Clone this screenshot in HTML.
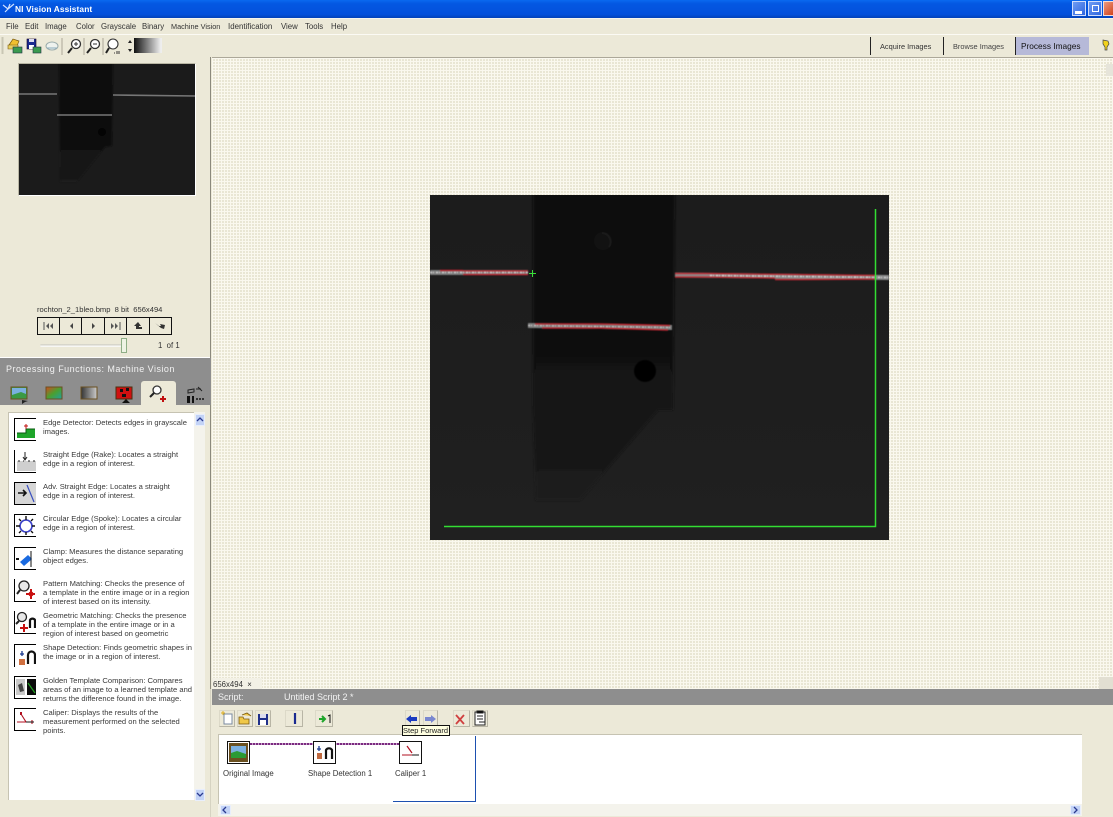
<!DOCTYPE html>
<html><head><meta charset="utf-8"><style>
html,body{margin:0;padding:0}
body{width:1113px;height:817px;overflow:hidden;position:relative;background:#ece9d8;font-family:"Liberation Sans",sans-serif;font-size:7.8px;color:#333}
div,svg,span{position:absolute}
.t{white-space:nowrap;line-height:9px;filter:blur(.3px)}
.btn{background:#ece9d8;border:1px solid #dcd9c8;border-right-color:#b8b5a5;border-bottom-color:#b8b5a5;box-sizing:border-box}
.ic{left:14px;width:22px;height:23px;border:1px solid #000;border-right:none;background:#fff;box-sizing:border-box}
.ic svg{left:0;top:0}
.row{left:43px;width:150px;line-height:9px;white-space:nowrap;font-size:7.6px;color:#3a3a3a;filter:blur(.3px)}
</style></head><body>

<!-- title bar -->
<div style="left:0;top:0;width:1113px;height:18px;background:linear-gradient(#0a6af0 0,#0458e2 20%,#0350dc 80%,#0342b8 100%)"></div>
<svg style="left:2px;top:2px" width="14" height="13"><path d="M1 3l5 4M8 2l-2 5 6-5M3 10l3-3" stroke="#cfe0ff" stroke-width="1.2" fill="none"/></svg>
<div class="t" style="left:15px;top:5px;color:#fff;font-size:8.4px;font-weight:bold;letter-spacing:.1px">NI Vision Assistant</div>
<div style="left:1072px;top:1px;width:14px;height:15px;background:linear-gradient(135deg,#6f9cf2,#2f66e0);border:1px solid #cfdcfb;box-sizing:border-box"><div style="left:2px;top:9px;width:7px;height:3px;background:#fff"></div></div>
<div style="left:1088px;top:1px;width:14px;height:15px;background:linear-gradient(135deg,#6f9cf2,#2f66e0);border:1px solid #cfdcfb;box-sizing:border-box"><div style="left:3px;top:3px;width:7px;height:7px;border:1px solid #fff;box-sizing:border-box"></div></div>
<div style="left:1103px;top:1px;width:10px;height:15px;background:linear-gradient(135deg,#eb9a80,#d2431c);border:1px solid #f3dfd8;border-right:none;box-sizing:border-box"></div>

<!-- menu -->
<div style="left:0;top:18px;width:1113px;height:1px;background:#f7f5ec"></div>
<div class="t" style="left:6px;top:22px">File</div>
<div class="t" style="left:25px;top:22px">Edit</div>
<div class="t" style="left:45px;top:22px">Image</div>
<div class="t" style="left:76px;top:22px">Color</div>
<div class="t" style="left:101px;top:22px">Grayscale</div>
<div class="t" style="left:142px;top:22px">Binary</div>
<div class="t" style="left:171px;top:22px;font-size:7.3px">Machine Vision</div>
<div class="t" style="left:228px;top:22px;font-size:7.9px">Identification</div>
<div class="t" style="left:281px;top:22px">View</div>
<div class="t" style="left:305px;top:22px">Tools</div>
<div class="t" style="left:331px;top:22px">Help</div>

<!-- toolbar -->
<div style="left:0;top:34px;width:1113px;height:1px;background:#fbfaf4"></div>
<svg style="left:0;top:34px" width="170" height="23">
<path d="M2 3v17M3 3v17" stroke="#c9c6b4" stroke-width="1"/>
<path d="M9 11l4-6 6 2-2 5z" fill="#f0c030" stroke="#7a5a10" stroke-width=".7"/><path d="M8 11h10v4H8z" fill="#e8d060" stroke="#7a5a10" stroke-width=".6"/><rect x="13" y="13" width="9" height="6" fill="#3a9a50" stroke="#234" stroke-width=".6"/>
<rect x="27" y="5" width="9" height="10" fill="#1a2a90" stroke="#102"  stroke-width=".6"/><rect x="29" y="5" width="5" height="3" fill="#dde"/><rect x="29" y="11" width="5" height="4" fill="#fff"/><rect x="33" y="13" width="8" height="6" fill="#3a9a50" stroke="#234" stroke-width=".6"/>
<ellipse cx="52" cy="12" rx="6" ry="4" fill="#eef2ee" stroke="#9aa" stroke-width="1"/><path d="M47 14h10" stroke="#8ab" stroke-width="1"/>
<path d="M62 4v17M84 4v17M103 4v17" stroke="#aca899" stroke-width="1"/>
<circle cx="76" cy="10" r="4.5" fill="#fff" stroke="#333" stroke-width="1.3"/><path d="M72 14l-4 5" stroke="#222" stroke-width="2"/><path d="M74 10h4M76 8v4" stroke="#333" stroke-width="1"/>
<circle cx="95" cy="10" r="4.5" fill="#fff" stroke="#333" stroke-width="1.3"/><path d="M91 14l-4 5" stroke="#222" stroke-width="2"/><path d="M93 10h4" stroke="#333" stroke-width="1"/>
<circle cx="113" cy="10" r="5" fill="#fff" stroke="#333" stroke-width="1.1"/><path d="M109 14l-3 5" stroke="#222" stroke-width="2"/><path d="M114 19h1M117 17v3M119 17v3" stroke="#333" stroke-width="1"/>
<path d="M130 6l-2 3h4zM130 18l-2-3h4z" fill="#222"/>
</svg>
<div style="left:134px;top:38px;width:28px;height:15px;background:linear-gradient(90deg,#111,#eee 95%)"></div>

<!-- mode tabs -->
<div style="left:870px;top:37px;width:74px;height:18px;border-left:1px solid #222;box-sizing:border-box"></div>
<div style="left:943px;top:37px;width:72px;height:18px;border-left:1px solid #222;box-sizing:border-box"></div>
<div style="left:1015px;top:37px;width:74px;height:18px;border-left:1px solid #222;background:#b6b9d8;box-sizing:border-box"></div>
<div class="t" style="left:880px;top:42px;color:#333;font-size:7.4px">Acquire Images</div>
<div class="t" style="left:953px;top:42px;color:#444;font-size:7.4px">Browse Images</div>
<div class="t" style="left:1021px;top:42px;color:#111;font-size:8.3px">Process Images</div>
<svg style="left:1100px;top:38px" width="13" height="15"><path d="M3 2l5 1 1 3-2 3v3H5V9L3 6z" fill="#f2d21c" stroke="#444" stroke-width=".7"/></svg>

<!-- workspace -->
<div style="left:212px;top:57px;width:901px;height:1px;background:#aca899"></div>
<div style="left:212px;top:58px;width:901px;height:631px;background-color:#e9e6d4;background-image:linear-gradient(#faf8ee 1px,transparent 1px),linear-gradient(90deg,#faf8ee 1px,transparent 1px);background-size:3px 3px"></div>
<div style="left:210px;top:57px;width:1px;height:632px;background:#8b897c"></div>
<div style="left:1106px;top:64px;width:7px;height:12px;background:#e6e4da"></div>
<div style="left:1099px;top:677px;width:14px;height:12px;background:#e2dfd2"></div>
<div style="left:212px;top:678px;width:50px;height:11px;background:#f3f1e6"></div>
<div class="t" style="left:213px;top:680px;color:#333">656x494 &nbsp;×</div>

<!-- main image -->
<svg style="left:430px;top:195px" width="459" height="345" viewBox="0 0 459 345">
<defs>
<linearGradient id="bg" x1="0" y1="0" x2="0" y2="1"><stop offset="0" stop-color="#1c1c1c"/><stop offset=".55" stop-color="#1e1e1e"/><stop offset="1" stop-color="#202020"/></linearGradient>
<linearGradient id="bd" gradientUnits="userSpaceOnUse" x1="0" y1="0" x2="0" y2="305"><stop offset="0" stop-color="#0e0e0e"/><stop offset=".5" stop-color="#111"/><stop offset=".72" stop-color="#131313"/><stop offset="1" stop-color="#1d1d1d"/></linearGradient>
<filter id="f1" x="-5%" y="-5%" width="110%" height="110%"><feGaussianBlur stdDeviation="1.200"/></filter>
<filter id="f2" x="-5%" y="-50%" width="110%" height="200%"><feGaussianBlur stdDeviation=".5"/></filter>
</defs>
<rect width="459" height="345" fill="url(#bg)"/>
<path d="M103 -5H245L243 215L228 215L150 305L106 305L103 210Z" fill="url(#bd)" filter="url(#f1)"/>
<circle cx="173" cy="46" r="9" fill="#121212"/>
<path d="M172 38a9 9 0 0 1 7 14" stroke="#1a1a1a" stroke-width="2" fill="none"/>
<circle cx="215" cy="176" r="11" fill="#040404" filter="url(#f2)"/>
<g filter="url(#f2)">
<!-- left line -->
<path d="M0 77.500H98" stroke="#7e7e7e" stroke-width="5"/>
<path d="M10 75.500H33M33 76H98M33 79.500H98" stroke="#bb2730" stroke-width="1.600"/>
<path d="M0 77.500H98" stroke="#d8d8d8" stroke-width="1.300" stroke-dasharray="2 1 1 2"/>
<!-- mid line -->
<path d="M98 130.500L242 132.500" stroke="#7e7e7e" stroke-width="5"/>
<path d="M105 129H170L240 130.500M112 133H170L238 135" stroke="#bb2730" stroke-width="1.600"/>
<path d="M98 130.500L242 132.500" stroke="#cfcfcf" stroke-width="1" stroke-dasharray="2 1 1 2"/>
<!-- right line -->
<path d="M245 80L459 82.500" stroke="#8a8a8a" stroke-width="5"/>
<path d="M245 78.500H275L445 80.500M245 82H280L345 83M345 84.500H372L445 84" stroke="#bb2730" stroke-width="1.500"/>
<path d="M280 80.500L459 82.500" stroke="#dcdcdc" stroke-width="1.200" stroke-dasharray="2 1 1 2"/>
</g>
<!-- green -->
<path d="M445.500 14V331.500H14" stroke="#33dd33" stroke-width="1.500" fill="none"/>
<path d="M102.500 75v7M99 78.500h7" stroke="#39e039" stroke-width="1"/>
</svg>

<!-- thumbnail -->
<svg style="left:19px;top:64px" width="177" height="132" viewBox="0 0 177 132">
<defs>
<linearGradient id="tb" gradientUnits="userSpaceOnUse" x1="0" y1="0" x2="0" y2="118"><stop offset="0" stop-color="#0e0e0e"/><stop offset=".72" stop-color="#111"/><stop offset="1" stop-color="#1a1a1a"/></linearGradient>
<filter id="f3" x="-5%" y="-5%" width="110%" height="110%"><feGaussianBlur stdDeviation=".8"/></filter>
</defs>
<rect width="177" height="132" fill="#1b1b1b"/>
<path d="M40 -2H94L93 82L86 83L58 118L41 118Z" fill="url(#tb)" filter="url(#f3)"/>
<circle cx="83" cy="68" r="4" fill="#040404"/>
<path d="M0 30H38M38 51H93M94 31L177 32" stroke="#777" stroke-width="1.600"/>
</svg>
<div style="left:18px;top:63px;width:178px;height:133px;border:1px solid #b9b6a4;border-right-color:#fff;border-bottom-color:#fff;box-sizing:border-box"></div>

<!-- nav -->
<div class="t" style="left:37px;top:305px;font-size:7.600px;color:#333">rochton_2_1bleo.bmp&nbsp; 8 bit&nbsp; 656x494</div>
<div style="left:37px;top:317px;width:135px;height:18px;border:1px solid #111;box-sizing:border-box"></div>
<svg style="left:37px;top:317px" width="136" height="18">
<path d="M22.500 1v16M44.500 1v16M67.500 1v16M89.500 1v16M112.500 1v16" stroke="#111"/>
<path d="M7 5v8" stroke="#555"/><path d="M12 6l-3 3 3 3zM16 6l-3 3 3 3z" fill="#555"/>
<path d="M36 6l-3 3 3 3z" fill="#444"/><path d="M55 6l3 3-3 3z" fill="#444"/>
<path d="M74 6l3 3-3 3zM78 6l3 3-3 3z" fill="#555"/><path d="M83 5v8" stroke="#555"/>
<path d="M101 5l-4 4h2v3h6v-2h-3V9h2z" fill="#333"/>
<path d="M118 6l4 3h2l-1-2 5 1-1 4-3-1z" fill="#333"/>
</svg>
<div style="left:40px;top:344px;width:84px;height:3px;background:linear-gradient(#cfcdc0,#fff);border-radius:2px"></div>
<div style="left:121px;top:338px;width:6px;height:15px;background:#eef3e4;border:1px solid #8fae86;box-sizing:border-box"></div>
<div class="t" style="left:158px;top:341px">1&nbsp; of 1</div>

<!-- processing panel -->
<div style="left:0;top:357px;width:210px;height:1px;background:#fff"></div>
<div style="left:0;top:358px;width:211px;height:47px;background:#8e8e8e"></div>
<div class="t" style="left:6px;top:365px;color:#f2f2f2;font-size:9px;letter-spacing:.47px">Processing Functions: Machine Vision</div>
<div style="left:141px;top:381px;width:35px;height:24px;background:#ece9d8;border-radius:3px 3px 0 0"></div>
<svg style="left:0;top:381px" width="210" height="24">
<defs>
<linearGradient id="rb" x1="0" y1="0" x2="1" y2="1"><stop offset="0" stop-color="#d04a20"/><stop offset=".5" stop-color="#4aa030"/><stop offset="1" stop-color="#20a0a0"/></linearGradient>
<linearGradient id="gy" x1="0" y1="0" x2="1" y2="0"><stop offset="0" stop-color="#333"/><stop offset="1" stop-color="#ccc"/></linearGradient>
</defs>
<rect x="11" y="6" width="16" height="12" fill="#3a9a45" stroke="#6a5020" stroke-width="1"/><path d="M12 7h14v6l-5-2-9 3z" fill="#7ab0e0"/><path d="M22 19l6 1-3 1-3 2z" fill="#222"/>
<rect x="46" y="6" width="16" height="12" fill="url(#rb)" stroke="#6a5020" stroke-width="1"/>
<rect x="81" y="6" width="16" height="12" fill="url(#gy)" stroke="#6a5020" stroke-width="1"/>
<rect x="116" y="6" width="16" height="12" fill="#d01010" stroke="#4a3010" stroke-width="1"/><path d="M120 8h3v3h-3zM126 7h3v3h-3zM122 13h4v3h-4zM126 18l-4 4h8z" fill="#111"/>
<circle cx="157" cy="9" r="4" fill="#fff" stroke="#333" stroke-width="1.300"/><path d="M154 12l-4 4" stroke="#222" stroke-width="2"/><path d="M163 15v6M160 18h6" stroke="#c01010" stroke-width="2"/>
<path d="M188 9l6-1v3l-6 1zM196 8h5M198 6l4 4" stroke="#222" stroke-width="1" fill="none"/><path d="M187 15h3v7h-3zM192 15h2v7h-2z" fill="#111"/><path d="M196 18h9" stroke="#333" stroke-width="2" stroke-dasharray="2 1"/>
</svg>

<!-- list -->
<div style="left:8px;top:412px;width:186px;height:388px;background:#fff;border-left:1px solid #c6c3b2;border-top:1px solid #c6c3b2;box-sizing:border-box"></div>
<div style="left:194px;top:412px;width:11px;height:388px;background:#f4f3ec"></div>
<div style="left:195px;top:414px;width:10px;height:12px;background:#c3d3f6;border:1px solid #e8eefc;box-sizing:border-box"></div>
<svg style="left:195px;top:414px" width="10" height="12"><path d="M2 7l3-3 3 3" stroke="#2a3a90" stroke-width="1.300" fill="none"/></svg>
<div style="left:195px;top:789px;width:10px;height:12px;background:#c3d3f6;border:1px solid #e8eefc;box-sizing:border-box"></div>
<svg style="left:195px;top:789px" width="10" height="12"><path d="M2 4l3 3 3-3" stroke="#2a3a90" stroke-width="1.300" fill="none"/></svg>

<!-- icons -->
<div class="ic" style="top:418px"><svg width="21" height="21"><path d="M2 19v-5h9v-4h9v9z" fill="#1ea52a"/><path d="M2 14h9v-4h9" stroke="#0a5a10" fill="none"/><path d="M11 5v5M9 7h4" stroke="#c01010"/></svg></div>
<div class="ic" style="top:450px;border-top:none"><svg width="21" height="21"><rect x="2" y="11" width="19" height="10" fill="#cfcfcf"/><path d="M10 2v8M8 7l2 3 2-3M3 11h2M8 11h1M13 11h2M18 11h2" stroke="#222" fill="none"/></svg></div>
<div class="ic" style="top:482px"><svg width="21" height="21"><rect x="0" y="0" width="21" height="21" fill="#d6d6d6"/><path d="M3 10h8M8 7l3 3-3 3" stroke="#111" stroke-width="1.600" fill="none"/><path d="M12 2l7 17" stroke="#3a50c0" stroke-width="1.200"/></svg></div>
<div class="ic" style="top:514px"><svg width="21" height="21"><circle cx="11" cy="11" r="6" fill="#fff" stroke="#3a40c8" stroke-width="1.600"/><path d="M11 1v4M11 17v3M1 11h4M17 11h3M4 4l2 2M18 4l-2 2M4 18l2-2M18 18l-2-2" stroke="#111" stroke-width="1.400"/></svg></div>
<div class="ic" style="top:547px"><svg width="21" height="21"><path d="M5 14l8-7 4 4-8 7z" fill="#1a6ae0"/><path d="M16 3v16" stroke="#111"/><path d="M1 11h3" stroke="#111" stroke-width="2"/></svg></div>
<div class="ic" style="top:579px;border-top:none"><svg width="21" height="21"><circle cx="9" cy="7" r="5" fill="#e8e8e8" stroke="#222" stroke-width="1.300"/><path d="M5 11l-3 4" stroke="#222" stroke-width="2"/><path d="M16 10v10M11 15h9" stroke="#c81010" stroke-width="2"/><circle cx="16" cy="15" r="2.500" fill="#c81010"/></svg></div>
<div class="ic" style="top:611px;border-top:none"><svg width="21" height="21"><circle cx="7" cy="6" r="4.500" fill="#e8e8e8" stroke="#222" stroke-width="1.300"/><path d="M4 10l-3 3" stroke="#222" stroke-width="2"/><path d="M15 17V9a3 3 0 0 1 5 0v8" stroke="#111" stroke-width="2.200" fill="none"/><path d="M9 13v8M5 17h8" stroke="#c81010" stroke-width="2"/></svg></div>
<div class="ic" style="top:644px;border-bottom:none;border-top:1px solid #000"><svg width="21" height="21"><rect x="4" y="14" width="6" height="6" fill="#d07040"/><path d="M7 6v5M5 9h4" stroke="#1a3a90" stroke-width="1.300"/><path d="M13 19V10a3.500 3.500 0 0 1 7 0v9" stroke="#111" stroke-width="2.200" fill="none"/></svg></div>
<div class="ic" style="top:676px"><svg width="21" height="21"><rect x="1" y="2" width="9" height="16" fill="#c9c9c9"/><path d="M3 8l4-2 2 8-4 1z" fill="#444"/><rect x="12" y="2" width="9" height="16" fill="#0a0a0a"/><path d="M13 6l7 10" stroke="#20a020" stroke-width="1.200"/></svg></div>
<div class="ic" style="top:708px"><svg width="21" height="21"><path d="M6 5l5 8H2M11 13h7M17 11v4" stroke="#b01020" stroke-width="1.100" fill="none"/><path d="M5 3h2v3H5z" fill="#b01020"/><path d="M11 13h8" stroke="#111"/></svg></div>

<div class="row" style="top:418px">Edge Detector: Detects edges in grayscale<br>images.</div>
<div class="row" style="top:450px">Straight Edge (Rake): Locates a straight<br>edge in a region of interest.</div>
<div class="row" style="top:482px">Adv. Straight Edge: Locates a straight<br>edge in a region of interest.</div>
<div class="row" style="top:514px">Circular Edge (Spoke): Locates a circular<br>edge in a region of interest.</div>
<div class="row" style="top:547px">Clamp: Measures the distance separating<br>object edges.</div>
<div class="row" style="top:579px">Pattern Matching: Checks the presence of<br>a template in the entire image or in a region<br>of interest based on its intensity.</div>
<div class="row" style="top:611px">Geometric Matching: Checks the presence<br>of a template in the entire image or in a<br>region of interest based on geometric</div>
<div class="row" style="top:643px">Shape Detection: Finds geometric shapes in<br>the image or in a region of interest.</div>
<div class="row" style="top:676px">Golden Template Comparison: Compares<br>areas of an image to a learned template and<br>returns the difference found in the image.</div>
<div class="row" style="top:708px">Caliper: Displays the results of the<br>measurement performed on the selected<br>points.</div>

<!-- script panel -->
<div style="left:212px;top:689px;width:901px;height:16px;background:#8e8e8e"></div>
<div class="t" style="left:218px;top:693px;color:#f2f2f2;font-size:9px">Script:</div>
<div class="t" style="left:284px;top:693px;color:#f2f2f2;font-size:9px">Untitled Script 2 *</div>

<div class="btn" style="left:219px;top:710px;width:16px;height:17px"></div>
<div class="btn" style="left:237px;top:710px;width:16px;height:17px"></div>
<div class="btn" style="left:255px;top:710px;width:16px;height:17px"></div>
<div class="btn" style="left:285px;top:710px;width:18px;height:17px"></div>
<div class="btn" style="left:315px;top:710px;width:18px;height:17px"></div>
<div class="btn" style="left:405px;top:710px;width:15px;height:17px"></div>
<div class="btn" style="left:423px;top:710px;width:15px;height:17px"></div>
<div class="btn" style="left:453px;top:710px;width:17px;height:17px"></div>
<div class="btn" style="left:472px;top:710px;width:16px;height:17px"></div>
<svg style="left:212px;top:705px" width="290" height="26">
<rect x="12" y="9" width="8" height="10" fill="#fff" stroke="#7a8aa0"/><path d="M11 6v4M9 8h4" stroke="#e0b020"/>
<path d="M27 19v-7h4l1 2h5v5zM30 10l5-2 4 3" fill="#f0c848" stroke="#7a5a10" stroke-width=".8"/>
<rect x="46" y="9" width="10" height="11" fill="#20308a"/><rect x="48" y="9" width="6" height="4" fill="#dde"/><rect x="48" y="15" width="6" height="5" fill="#fff"/>
<path d="M83 8v11" stroke="#1a2a90" stroke-width="2.200"/>
<path d="M107 14h6M110 11l3 3-3 3" stroke="#1ea52a" stroke-width="2" fill="none"/><path d="M116 11l2-1v8" stroke="#111" fill="none"/>
<path d="M194 14l5-4v2h6v4h-6v2z" fill="#1a3ac0"/>
<path d="M224 14l-5-4v2h-6v4h6v2z" fill="#7a88d0"/>
<path d="M244 10l8 9M252 10l-8 9" stroke="#d04040" stroke-width="1.800"/>
<rect x="263" y="7" width="10" height="13" fill="#fff" stroke="#222"/><path d="M265 6h6v2h-6zM265 11h6M265 14h6M267 17h6" stroke="#222"/>
</svg>

<!-- script canvas -->
<div style="left:218px;top:734px;width:864px;height:70px;background:#fff;border-left:1px solid #c6c3b2;border-top:1px solid #c6c3b2;box-sizing:border-box"></div>
<div style="left:475px;top:736px;width:1px;height:66px;background:#1d50b0"></div>
<div style="left:393px;top:801px;width:83px;height:1px;background:#1d50b0"></div>
<div style="left:250px;top:743px;width:150px;height:2px;background:repeating-linear-gradient(90deg,#7a2a80 0 2px,#c9a0c9 2px 3px)"></div>
<div style="left:227px;top:741px;width:23px;height:23px;background:#fff;border:1px solid #111;box-sizing:border-box"></div>
<svg style="left:228px;top:742px" width="21" height="21"><rect x="1" y="1" width="19" height="19" fill="#6a5020"/><rect x="3" y="4" width="15" height="12" fill="#7ab0e0"/><path d="M3 11l6-2 9 3v4H3z" fill="#2a9a35"/></svg>
<div style="left:313px;top:741px;width:23px;height:23px;background:#fff;border:1px solid #111;box-sizing:border-box"></div>
<svg style="left:314px;top:742px" width="21" height="21"><rect x="3" y="11" width="5" height="6" fill="#c06a40"/><path d="M5 4v5M3 7h4" stroke="#1a3a90" stroke-width="1.300"/><path d="M12 17V8a3.500 3.500 0 0 1 6 0v9" stroke="#111" stroke-width="2.200" fill="none"/></svg>
<div style="left:399px;top:741px;width:23px;height:23px;background:#fff;border:1px solid #111;box-sizing:border-box"></div>
<svg style="left:400px;top:742px" width="21" height="21"><path d="M7 4l5 7" stroke="#b01020" stroke-width="1.200"/><path d="M2 13h16" stroke="#b01020"/><path d="M12 13h7" stroke="#111"/></svg>
<div class="t" style="left:223px;top:769px;color:#333;font-size:7.800px">Original Image</div>
<div class="t" style="left:308px;top:769px;color:#333;font-size:7.800px">Shape Detection 1</div>
<div class="t" style="left:395px;top:769px;color:#333;font-size:7.800px">Caliper 1</div>

<!-- tooltip -->
<div style="left:402px;top:725px;width:48px;height:11px;background:#ffffe1;border:1px solid #111;box-sizing:border-box"></div>
<div class="t" style="left:403px;top:726px;font-size:7.500px;color:#222">Step Forward</div>

<!-- bottom scrollbar -->
<div style="left:218px;top:804px;width:864px;height:12px;background:#f4f3ec"></div>
<div style="left:220px;top:805px;width:11px;height:10px;background:#c3d3f6;border:1px solid #e8eefc;box-sizing:border-box"></div>
<svg style="left:220px;top:805px" width="11" height="10"><path d="M6 2L3 5l3 3" stroke="#2a3a90" stroke-width="1.300" fill="none"/></svg>
<div style="left:1070px;top:805px;width:11px;height:10px;background:#c3d3f6;border:1px solid #e8eefc;box-sizing:border-box"></div>
<svg style="left:1070px;top:805px" width="11" height="10"><path d="M4 2l3 3-3 3" stroke="#2a3a90" stroke-width="1.300" fill="none"/></svg>
<div style="left:210px;top:689px;width:1px;height:128px;background:#d6d3c2"></div>
</body></html>
